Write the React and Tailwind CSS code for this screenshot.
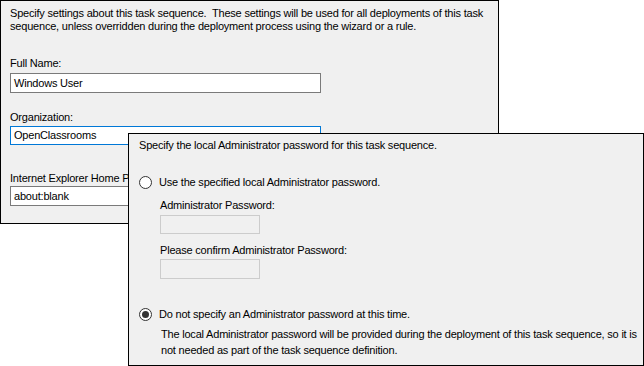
import React from 'react';

const font = { fontFamily: '"Liberation Sans", Arial, sans-serif' };

const Radio = ({ checked }) => (
  <span className="relative flex h-[13px] w-[13px] shrink-0 items-center justify-center rounded-full border border-[#333333] bg-white">
    {checked && <span className="h-[7px] w-[7px] rounded-full bg-[#333333]" />}
  </span>
);

const TextBox = ({ value, focused, className = '' }) => (
  <div
    className={`flex w-[311px] items-center border bg-white pl-[3px] ${
      focused ? 'border-[#0078d7]' : 'border-[#7a7a7a]'
    } ${className}`}
  >
    {value}
  </div>
);

const App = () => {
  return (
    <div
      className="relative h-[366px] w-[644px] overflow-hidden whitespace-nowrap bg-white text-[11px] leading-[13px] tracking-[-0.2px] text-black"
      style={font}
    >
      {/* settings window */}
      <div className="h-[224px] w-[499px] border border-black bg-[#f0f0f0] pl-[9px] pt-[6px]">
        <p>
          Specify settings about this task sequence.&nbsp; These settings will be used for all deployments of this task
          <br />
          sequence, unless overridden during the deployment process using the wizard or a rule.
        </p>

        <div className="mt-[24px]">Full Name:</div>
        <TextBox value="Windows User" className="mt-[3px] h-[20px]" />

        <div className="mt-[18px]">Organization:</div>
        <TextBox value="OpenClassrooms" focused className="mt-[2px] h-[19px]" />

        <div className="mt-[27px]">Internet Explorer Home Page:</div>
        <TextBox value="about:blank" className="mt-[1px] h-[20px]" />
      </div>

      {/* admin password window, lies over the first one */}
      <div className="absolute left-[128px] top-[133px] h-[233px] w-[516px] border border-black bg-[#f0f0f0] pl-[10px] pt-[5px]">
        <p>Specify the local Administrator password for this task sequence.</p>

        <div className="mt-[24px] flex items-center gap-[7px]">
          <Radio />
          <span>Use the specified local Administrator password.</span>
        </div>

        <div className="pl-[21px]">
          <div className="mt-[10px]">Administrator Password:</div>
          <div className="mt-[3px] h-[19px] w-[100px] border border-[#cccccc] bg-[#f0f0f0]" />

          <div className="mt-[10px]">Please confirm Administrator Password:</div>
          <div className="mt-[2px] h-[20px] w-[100px] border border-[#cccccc] bg-[#f0f0f0]" />
        </div>

        <div className="mt-[29px] flex items-center gap-[7px]">
          <Radio checked />
          <span>Do not specify an Administrator password at this time.</span>
        </div>

        <p className="mt-[5px] pl-[22px] leading-[16px]">
          The local Administrator password will be provided during the deployment of this task sequence, so it is
          <br />
          not needed as part of the task sequence definition.
        </p>
      </div>
    </div>
  );
};

export default App;
